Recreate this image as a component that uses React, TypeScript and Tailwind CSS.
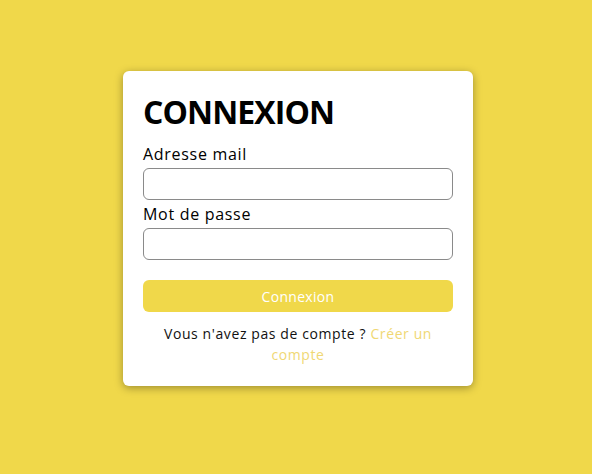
export default function App() {
  return (
    <div
      className="flex min-h-screen justify-center bg-[#f0d84a] pl-[4px] pt-[71px]"
      style={{ fontFamily: '"Open Sans", "Noto Sans", sans-serif' }}
    >
      <div className="h-fit w-[350px] rounded-md bg-white px-5 pb-[21px] pt-[22px] shadow-[0_2px_8px_rgba(0,0,0,0.35)]">
        <h1 className="text-[32px] font-bold leading-[38px] tracking-[-0.9px] text-black">CONNEXION</h1>
        <form className="mt-[11px] flex flex-col" onSubmit={(e) => e.preventDefault()}>
          <label className="text-[16px] leading-6 tracking-[0.7px] text-black">Adresse mail</label>
          <input
            type="email"
            className="mt-[2px] h-8 w-full rounded-md border border-[#8a8a8a] px-2 outline-none"
          />
          <label className="mt-[2px] text-[16px] leading-6 tracking-[0.7px] text-black">Mot de passe</label>
          <input
            type="password"
            className="mt-[2px] h-8 w-full rounded-md border border-[#8a8a8a] px-2 outline-none"
          />
          <button
            type="submit"
            className="mt-5 h-8 w-full rounded-md bg-[#f0d84a] text-[14px] tracking-[0.3px] text-white"
          >
            Connexion
          </button>
        </form>
        <p className="mx-auto mt-[11px] w-[280px] text-center text-[14px] leading-[21px] tracking-[0.6px] text-[#111]">
          Vous n'avez pas de compte ? <a href="#" className="text-[#f0d874]">Créer un compte</a>
        </p>
      </div>
    </div>
  );
}
